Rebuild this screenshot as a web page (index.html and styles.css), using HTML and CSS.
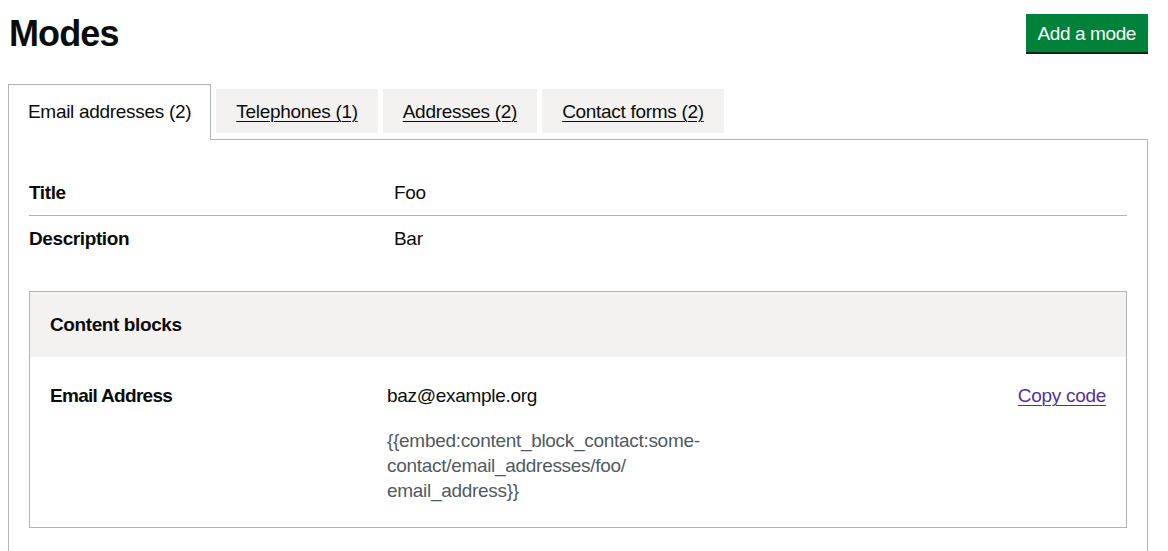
FILE: index.html
```html
<!DOCTYPE html>
<html lang="en">
<head>
<meta charset="utf-8">
<title>Modes</title>
<link rel="stylesheet" href="styles.css">
</head>
<body>
<main class="page">
  <div class="page-header">
    <h1 class="heading">Modes</h1>
    <a class="button" href="#">Add a mode</a>
  </div>

  <div class="tabs">
    <ul class="tabs-list">
      <li class="tab tab-selected"><a class="tab-link" href="#email">Email addresses (2)</a></li>
      <li class="tab"><a class="tab-link" href="#tel">Telephones (1)</a></li>
      <li class="tab"><a class="tab-link" href="#addr">Addresses (2)</a></li>
      <li class="tab"><a class="tab-link" href="#forms">Contact forms (2)</a></li>
    </ul>

    <section class="tab-panel" id="email">
      <dl class="summary">
        <div class="summary-row">
          <dt class="summary-key">Title</dt>
          <dd class="summary-value">Foo</dd>
        </div>
        <div class="summary-row summary-row-last">
          <dt class="summary-key">Description</dt>
          <dd class="summary-value">Bar</dd>
        </div>
      </dl>

      <div class="card">
        <div class="card-header">
          <h2 class="card-title">Content blocks</h2>
        </div>
        <div class="card-body">
          <div class="card-row">
            <div class="card-key">Email Address</div>
            <div class="card-value">
              <p class="card-text">baz@example.org</p>
              <p class="embed-code">{{embed:content_block_contact:some-<br>contact/email_addresses/foo/<br>email_address}}</p>
            </div>
            <div class="card-actions">
              <a class="link-visited" href="#">Copy code</a>
            </div>
          </div>
        </div>
      </div>
    </section>
  </div>
</main>
</body>
</html>
```

FILE: styles.css
```css
* {
  box-sizing: border-box;
}

html, body {
  background: #ffffff;
}

body {
  margin: 0;
  font-family: "Liberation Sans", Arial, sans-serif;
  color: #0b0c0c;
  font-size: 19px;
  line-height: 25px;
  letter-spacing: -0.3px;
}

.page {
  width: 1140px;
  margin-left: 8px;
  padding-top: 14px;
}

.page-header {
  display: flex;
  justify-content: space-between;
  align-items: flex-start;
  margin-bottom: 35px;
}

.heading {
  margin: 0;
  font-size: 36px;
  line-height: 40px;
  font-weight: 700;
  padding-left: 1px;
  letter-spacing: -0.9px;
}

.button {
  display: inline-block;
  background: #00823b;
  color: #ffffff;
  text-decoration: none;
  font-size: 19px;
  line-height: 19px;
  padding: 8px 10px 7px;
  border: 2px solid transparent;
  box-shadow: 0 2px 0 #002d18;
  letter-spacing: -0.4px;
}

.tabs-list {
  display: flex;
  list-style: none;
  margin: 0;
  padding: 0;
  align-items: flex-start;
}

.tab {
  margin-right: 5px;
  padding: 10px 20px;
  background: #f3f2f1;
  height: 44px;
}

.tab-link {
  color: #0b0c0c;
  text-decoration: underline;
  text-underline-offset: 3px;
  text-decoration-thickness: 1px;
}

.tab-selected {
  margin-top: -5px;
  padding: 14px 19px 16px;
  height: 56px;
  margin-bottom: -1px;
  background: #ffffff;
  border: 1px solid #b1b4b6;
  border-bottom: 0;
  position: relative;
}

.tab-selected .tab-link {
  text-decoration: none;
}

.tab-panel {
  border: 1px solid #b1b4b6;
  padding: 30px 20px 40px;
}

.summary {
  margin: 0 0 30px;
}

.summary-row {
  display: flex;
  border-bottom: 1px solid #b1b4b6;
}

.summary-row-last {
  border-bottom: 0;
}

.summary-key {
  width: 365px;
  padding: 10px 20px 10px 0;
  margin: 0;
  font-weight: 700;
  letter-spacing: -0.4px;
}

.summary-value {
  margin: 0;
  padding: 10px 0;
}

.card {
  border: 1px solid #b1b4b6;
}

.card-header {
  background: #f3f2f1;
  padding: 20px;
}

.card-title {
  margin: 0;
  font-size: 19px;
  line-height: 25px;
  font-weight: 700;
  letter-spacing: -0.4px;
}

.card-body {
  padding: 26px 20px 24px;
}

.card-row {
  display: flex;
}

.card-key {
  width: 337px;
  padding-right: 20px;
  font-weight: 700;
  letter-spacing: -0.7px;
}

.card-value {
  flex: 1;
}

.card-text {
  margin: 0 0 20px;
}

.embed-code {
  margin: 0;
  color: #505a5f;
}

.card-actions {
  text-align: right;
}

.link-visited {
  color: #54319f;
  text-decoration: underline;
  text-underline-offset: 3px;
  text-decoration-thickness: 1px;
}
```
